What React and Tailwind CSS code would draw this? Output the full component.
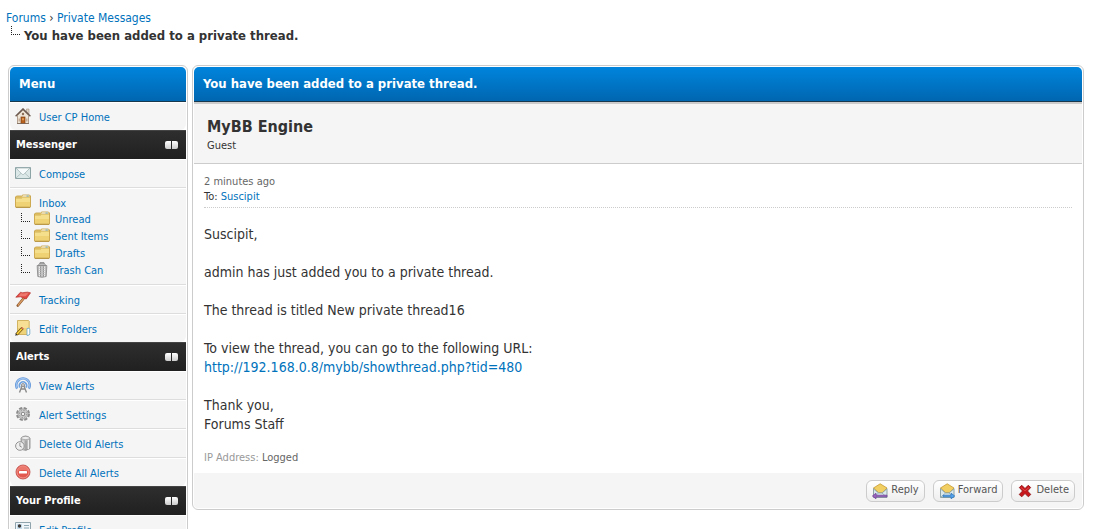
function Svg({ children, className = "" }) {
  return (
    <svg viewBox="0 0 16 16" className={`h-4 w-4 shrink-0 ${className}`} aria-hidden="true">
      {children}
    </svg>
  );
}

function HomeIcon() {
  return (
    <Svg>
      <path d="M11.5 1h2.500v5l-2.500-2z" fill="#ded2c4" stroke="#a3927f" strokeWidth=".6" />
      <path d="M2.500 7.500 8 2l5.500 5.500v8h-11z" fill="#efe5d6" stroke="#a38d78" strokeWidth=".8" />
      <path d="M.6 8.200 8 .9l7.400 7.300" fill="none" stroke="#6d5a51" strokeWidth="1.400" />
      <rect x="6" y="9" width="4" height="6.500" fill="#b8611e" stroke="#7d3d12" strokeWidth=".7" />
      <path d="M7.200 10.200h1.600v2H7.200z" fill="#e6a863" />
      <circle cx="8" cy="6" r="1.200" fill="#8b6d57" />
      <path d="M3.500 10.500h1.500v3H3.500zM11 10.500h1.500v3H11z" fill="#c5ad97" />
      <path d="M2 15.500h12" stroke="#7b6a5d" strokeWidth=".8" />
    </Svg>
  );
}

function MailIcon() {
  return (
    <Svg>
      <path d="M.5 2.500h15v11H.5z" fill="#dce7e7" stroke="#8ea5a8" />
      <path d="M1 3h14L8.800 9.300q-.8.700-1.600 0z" fill="#f8fbfb" stroke="#a4b6b8" strokeWidth=".8" />
      <path d="m1 13 5-4.700M15 13l-5-4.700" stroke="#a9bbbd" strokeWidth=".8" />
    </Svg>
  );
}

function FolderIcon() {
  return (
    <Svg>
      <path d="M.5 13V3l1-1h5l1.300-1h6.700l1 1v11z" fill="#e9cc70" stroke="#bf9a3d" strokeWidth=".8" />
      <path d="M8 1.500h6.300v2H7z" fill="#fdfbf1" />
      <path d="M11.500 1.600h2.300v1h-2.300z" fill="#52aada" />
      <path d="M.5 4h6l1.200-1h7.800v9.500l-.7.700H1.200l-.7-.7z" fill="#f6df8c" stroke="#c9a44b" strokeWidth=".8" />
      <path d="M1 8h14v4.500H1z" fill="#e9c65e" opacity=".55" />
      <path d="M.8 13.300h14.400" stroke="#a98732" strokeWidth=".8" />
    </Svg>
  );
}

function TrashIcon() {
  return (
    <Svg>
      <path d="M6 2V.7h4V2" fill="none" stroke="#858585" />
      <path d="M4 3.500 5.500 1.600h5L12 3.500z" fill="#c2c2c2" stroke="#858585" strokeWidth=".7" />
      <path d="M3.200 3.500h9.600v1l-.6 10q-4.200 1.600-8.400 0l-.6-10z" fill="#bcbcbc" stroke="#858585" strokeWidth=".8" />
      <path d="M5.500 4.500v10M8 4.500v10.500M10.500 4.500v10" stroke="#eee" strokeDasharray="1.400 .7" />
      <path d="M6.700 4.500v10.500M9.300 4.500v10.500" stroke="#747474" strokeWidth=".7" strokeDasharray="1.400 .7" />
    </Svg>
  );
}

function FlagIcon() {
  return (
    <Svg>
      <path d="m2.800 14.500 7-8.500" stroke="#885027" strokeWidth="2.600" strokeLinecap="round" />
      <path d="m2.800 14.500 7-8.500" stroke="#d9a066" strokeWidth="1.300" />
      <path d="M5.500 1.200q2 .9 4.500.2t5.500.4L11.200 8 8.800 7.200 5.500 5.800.8 6.200z" fill="#e14a44" stroke="#b5302c" strokeWidth=".7" />
      <path d="M6 2.100q2 .9 4 .2t3.500.3l-3 2.600-7 .1z" fill="#f28b7f" opacity=".7" />
    </Svg>
  );
}

function EditFolderIcon() {
  return (
    <Svg>
      <path d="M2.500.5h11l.7.700v13.300H2.500z" fill="#f7e096" stroke="#c8a447" strokeWidth=".8" />
      <path d="M3 8h10.500v6H3z" fill="#e9c968" opacity=".6" />
      <path d="M12 8.500q2.800-1.300 2.800 1.200v4q0 1.800-2.800 1.800z" fill="#fff" stroke="#62a5cb" strokeWidth=".8" />
      <path d="m1.500 14.500 6-6.500" stroke="#6b4c12" strokeWidth="3" />
      <path d="m1.800 14.200 5-5.500" stroke="#ffd83d" strokeWidth="1.600" />
      <path d="m7 8.700 1-1" stroke="#e4725c" strokeWidth="2.200" />
      <path d="m.2 15.800.7-2.500 1.600 1.600z" fill="#222" />
    </Svg>
  );
}

function BroadcastIcon() {
  return (
    <Svg>
      <path d="M2.200 11.500A6.700 6.700 0 1 1 13.800 11.500" fill="none" stroke="#5d93d8" strokeWidth="2.600" />
      <path d="M2.200 11.500A6.700 6.700 0 1 1 13.800 11.500" fill="none" stroke="#9dc3ef" strokeWidth="1.300" />
      <path d="M5 10.500a3.600 3.600 0 1 1 6 0" fill="none" stroke="#6fa3e0" strokeWidth="1.600" />
      <path d="M7.400 8 4.500 15.500M8.600 8l2.900 7.500M6 12h4" stroke="#8b8b8b" strokeWidth="1.400" fill="none" />
      <circle cx="8" cy="8" r="1.500" fill="#d4d4d4" stroke="#777" strokeWidth=".7" />
    </Svg>
  );
}

function GearIcon() {
  return (
    <Svg>
      <circle cx="8" cy="8" r="6" fill="none" stroke="#8b8b8b" strokeWidth="2" strokeDasharray="3.200 1.510" />
      <circle cx="8" cy="8" r="5" fill="#d0d0d0" stroke="#999" strokeWidth=".8" />
      <circle cx="8" cy="8" r="3.600" fill="none" stroke="#8f8f8f" strokeDasharray="1.400 1.430" />
      <circle cx="8" cy="8" r="1.800" fill="#f4f4f4" stroke="#777" strokeWidth=".9" />
    </Svg>
  );
}

function OldAlertsIcon() {
  return (
    <Svg>
      <path d="M6 3q4.500-4 9 0v10.500q-4 3-8.500 1z" fill="#bdbdbd" stroke="#858585" strokeWidth=".8" />
      <ellipse cx="10.500" cy="3" rx="4" ry="1.600" fill="#eee" stroke="#999" strokeWidth=".6" />
      <path d="M8 5.500v9M13.500 5v9" stroke="#ededed" />
      <path d="M11 5.500v10" stroke="#8e8e8e" />
      <circle cx="4.900" cy="11" r="4.300" fill="#eee" stroke="#929292" />
      <path d="M4.900 8v3.200l2 1" fill="none" stroke="#888" strokeWidth=".9" />
    </Svg>
  );
}

function RemoveIcon() {
  return (
    <Svg>
      <circle cx="8" cy="8" r="7" fill="#e2584f" stroke="#b8443e" strokeWidth=".8" />
      <circle cx="8" cy="8" r="6" fill="none" stroke="#f39a91" strokeWidth=".9" />
      <path d="M2.500 7a5.500 5.500 0 0 1 11 0q-5.500-2-11 0z" fill="#f0847a" opacity=".7" />
      <rect x="4" y="7" width="8" height="2.500" rx=".5" fill="#fff" />
    </Svg>
  );
}

function CardIcon() {
  return (
    <Svg>
      <path d="M.5 1.500h15v12H.5z" fill="#eff5f8" stroke="#8fa4ad" />
      <path d="M2 3h5v9H2z" fill="#c5dcec" />
      <circle cx="4.500" cy="5" r="1.700" fill="#3d3835" />
      <path d="M2.500 12q0-4 2-4t2 4z" fill="#356da5" />
      <path d="M9 4.500h5M9 7h5M9 9.500h5" stroke="#8ea8b4" />
    </Svg>
  );
}

function OpenMail({ children }) {
  return (
    <Svg>
      <path d="M1.500 5.500h13.500v9H1.500z" fill="#dce9ec" stroke="#769193" strokeWidth=".8" />
      <path d="M1.500 5 8.200.8 15 5l-4.500 4.500h-4z" fill="#f1cf62" stroke="#c79b35" strokeWidth=".8" />
      <path d="m1.500 6 5 4h3.500l5-4M2 14l4.500-4M14.500 14 10 10" fill="none" stroke="#88a8b2" strokeWidth=".8" />
      {children}
    </Svg>
  );
}

function ReplyIcon() {
  return (
    <OpenMail>
      <path d="m.4 13 3.600-2.800v2h11v1.600H4v2z" fill="#9864bc" stroke="#6f3c98" strokeWidth=".7" />
    </OpenMail>
  );
}

function ForwardIcon() {
  return (
    <OpenMail>
      <path d="m15.700 13-3.600-2.800v2H4v1.600h8.100v2z" fill="#55a2ee" stroke="#246fb9" strokeWidth=".7" />
    </OpenMail>
  );
}

function CrossIcon() {
  return (
    <Svg>
      <path
        d="m2.300 4.500 2.500-2.200L8 5.500l3.200-3.200 2.500 2.200L10.500 8l3.300 3.500-2.500 2.300L8 10.500l-3.200 3.300-2.600-2.300L5.500 8z"
        fill="#c8171c"
        stroke="#8b0e10"
        strokeWidth=".8"
        strokeLinejoin="round"
      />
      <path d="m4 4.500 4 3.300 4-3.300" fill="none" stroke="#e25555" strokeWidth=".8" />
    </Svg>
  );
}

// Dotted elbow in front of nested entries
function Branch({ className = "" }) {
  return (
    <svg viewBox="0 0 10 9" className={`h-[9px] w-[10px] shrink-0 ${className}`} aria-hidden="true">
      <path d="M.5 0v9M2 8.500h8" fill="none" stroke="#222" strokeDasharray="1 1" />
    </svg>
  );
}

const SECTIONS = [
  { title: null, items: [{ label: "User CP Home", Icon: HomeIcon }] },
  {
    title: "Messenger",
    items: [
      { label: "Compose", Icon: MailIcon },
      {
        label: "Inbox",
        Icon: FolderIcon,
        children: [
          { label: "Unread", Icon: FolderIcon },
          { label: "Sent Items", Icon: FolderIcon },
          { label: "Drafts", Icon: FolderIcon },
          { label: "Trash Can", Icon: TrashIcon },
        ],
      },
      { label: "Tracking", Icon: FlagIcon },
      { label: "Edit Folders", Icon: EditFolderIcon },
    ],
  },
  {
    title: "Alerts",
    items: [
      { label: "View Alerts", Icon: BroadcastIcon },
      { label: "Alert Settings", Icon: GearIcon },
      { label: "Delete Old Alerts", Icon: OldAlertsIcon },
      { label: "Delete All Alerts", Icon: RemoveIcon },
    ],
  },
  { title: "Your Profile", items: [{ label: "Edit Profile", Icon: CardIcon }] },
];

const ACTIONS = [
  { label: "Reply", Icon: ReplyIcon },
  { label: "Forward", Icon: ForwardIcon },
  { label: "Delete", Icon: CrossIcon },
];

const LINK = "text-[#0072bc] hover:underline";
const PANEL = "rounded-md border border-[#ccc] bg-white p-px";
const PANEL_HEAD =
  "flex h-[35px] items-center rounded-t-[5px] border-b border-[#17384d] bg-linear-to-b from-[#0085dd] to-[#0066b0] px-[9px] text-[13px] font-bold text-white";

function MenuItem({ item }) {
  const { label, Icon, children } = item;
  return (
    <li className="border-t border-b border-t-white border-b-[#ddd] bg-[#f5f5f5] pl-[5px] last:rounded-b-md last:border-b-0">
      <a href="#" className={`flex h-[27px] items-start gap-2 pt-[5px] leading-5 ${LINK}`}>
        <Icon />
        {label}
      </a>
      {children && (
        <ul className="-mt-[5px] pb-[5px] pl-[6px]">
          {children.map((child) => (
            <li key={child.label} className="flex h-[17px] items-start">
              <Branch className="mt-[2px] mr-[3px]" />
              <a href="#" className={`flex items-start gap-[5px] leading-[18px] ${LINK}`}>
                <child.Icon />
                {child.label}
              </a>
            </li>
          ))}
        </ul>
      )}
    </li>
  );
}

function Menu() {
  return (
    <nav className={`w-[180px] shrink-0 text-[11px] ${PANEL}`}>
      <h2 className={PANEL_HEAD}>Menu</h2>
      {SECTIONS.map((section) => (
        <section key={section.title ?? "home"}>
          {section.title && (
            <h3 className="flex h-[29px] items-center justify-between border-t border-[#444] bg-linear-to-b from-[#2e2e2e] to-[#202020] pr-2 pl-[6px] font-bold text-white">
              {section.title}
              <button type="button" aria-label={`Toggle ${section.title}`} className="flex gap-px">
                <span className="h-2 w-[6px] rounded-l-[2px] bg-linear-to-b from-white to-[#ccc]" />
                <span className="h-2 w-[6px] rounded-r-[2px] bg-linear-to-b from-white to-[#ccc]" />
              </button>
            </h3>
          )}
          <ul>
            {section.items.map((item) => (
              <MenuItem key={item.label} item={item} />
            ))}
          </ul>
        </section>
      ))}
    </nav>
  );
}

function Message() {
  return (
    <main className={`min-w-0 flex-1 ${PANEL}`}>
      <h2 className={PANEL_HEAD}>You have been added to a private thread.</h2>

      <div className="border-t-2 border-b border-[#ccc] bg-[#f5f5f5] px-[13px] pt-[13px] pb-2">
        <p className="text-base leading-5 font-bold">MyBB Engine</p>
        <p className="text-[11px] leading-[18px]">Guest</p>
      </div>

      <div className="px-[10px] pt-[10px] pb-[7px]">
        <div className="border-b border-dotted border-[#ccc] pb-[3px] text-[11px] leading-[15px]">
          <p className="text-[#666]">2 minutes ago</p>
          <p>
            To: <a href="#" className={LINK}>Suscipit</a>
          </p>
        </div>
        <div className="space-y-[19px] pt-[17px] text-sm leading-[19px]">
          <p>Suscipit,</p>
          <p>admin has just added you to a private thread.</p>
          <p>The thread is titled New private thread16</p>
          <p>
            To view the thread, you can go to the following URL:
            <br />
            <a href="#" className={LINK}>http://192.168.0.8/mybb/showthread.php?tid=480</a>
          </p>
          <p>
            Thank you,
            <br />
            Forums Staff
          </p>
        </div>
        <p className="pt-4 text-[11px] leading-4 text-[#999]">
          IP Address: <span className="text-[#666]">Logged</span>
        </p>
      </div>

      <div className="flex h-[35px] items-center justify-end gap-2 rounded-b-[4px] bg-[#f5f5f5] px-[7px]">
        {ACTIONS.map(({ label, Icon }) => (
          <button
            key={label}
            type="button"
            className="flex h-[22px] items-center gap-[3px] rounded-md border border-[#ccc] bg-linear-to-b from-white to-[#eee] px-[5px] text-[11px] text-[#555]"
          >
            <Icon />
            {label}
          </button>
        ))}
      </div>
    </main>
  );
}

function App() {
  return (
    <div className="bg-white pt-[10px] pr-[10px] pl-2 font-['Tahoma','DejaVu_Sans_Condensed','DejaVu_Sans',sans-serif] text-[#333]">
      <header className="-ml-[2px] pb-5">
        <div className="text-xs leading-4">
          <a href="#" className={LINK}>Forums</a> › <a href="#" className={LINK}>Private Messages</a>
        </div>
        <div className="flex pl-[5px] text-[13px] leading-[19px] font-bold">
          <Branch className="mr-[3px]" />
          <h1>You have been added to a private thread.</h1>
        </div>
      </header>

      <div className="flex items-start gap-1">
        <Menu />
        <Message />
      </div>
    </div>
  );
}

export default App;
